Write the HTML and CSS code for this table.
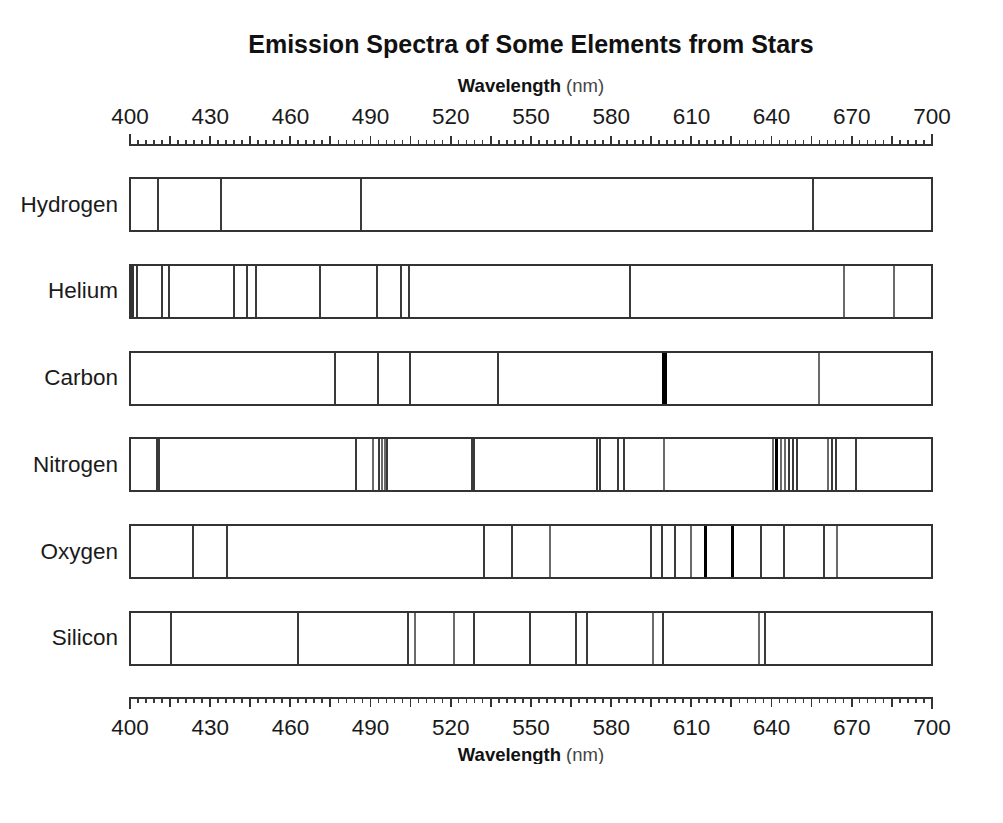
FILE: index.html
```html
<!DOCTYPE html>
<html lang="en">
<head>
<meta charset="utf-8">
<title>Emission Spectra of Some Elements from Stars</title>
<link rel="stylesheet" href="styles.css">
</head>
<body>
<div class="figure">
  <h1 class="title">Emission Spectra of Some Elements from Stars</h1>
  <div class="axis-title axis-title--top"><b>Wavelength</b> (nm)</div>
  <div class="tick-labels tick-labels--top">
    <span>400</span><span>430</span><span>460</span><span>490</span><span>520</span><span>550</span><span>580</span><span>610</span><span>640</span><span>670</span><span>700</span>
  </div>
  <div class="ticks ticks--top"></div>

  <div class="spectra">
    <div class="spectrum">
      <div class="element">Hydrogen</div>
      <div class="band">
        <i class="line" style="left:26px"></i>
        <i class="line" style="left:89px"></i>
        <i class="line" style="left:228.5px"></i>
        <i class="line" style="left:680.7px"></i>
      </div>
    </div>
    <div class="spectrum">
      <div class="element">Helium</div>
      <div class="band">
        <i class="line line--wide" style="left:0px"></i>
        <i class="line" style="left:5.3px"></i>
        <i class="line" style="left:30.3px"></i>
        <i class="line" style="left:36.7px"></i>
        <i class="line" style="left:102px"></i>
        <i class="line" style="left:114.7px"></i>
        <i class="line" style="left:124px"></i>
        <i class="line" style="left:188.3px"></i>
        <i class="line" style="left:244.7px"></i>
        <i class="line" style="left:269px"></i>
        <i class="line" style="left:277px"></i>
        <i class="line" style="left:498px"></i>
        <i class="line line--light" style="left:712px"></i>
        <i class="line line--light" style="left:762px"></i>
      </div>
    </div>
    <div class="spectrum">
      <div class="element">Carbon</div>
      <div class="band">
        <i class="line" style="left:203px"></i>
        <i class="line" style="left:246.3px"></i>
        <i class="line" style="left:278px"></i>
        <i class="line" style="left:366.3px"></i>
        <i class="line line--heavy" style="left:530.5px"></i>
        <i class="line line--light" style="left:686.7px"></i>
      </div>
    </div>
    <div class="spectrum">
      <div class="element">Nitrogen</div>
      <div class="band">
        <i class="line" style="left:24.7px"></i>
        <i class="line" style="left:27.3px"></i>
        <i class="line" style="left:224px"></i>
        <i class="line line--light" style="left:241.3px"></i>
        <i class="line" style="left:247px"></i>
        <i class="line line--light" style="left:250.3px"></i>
        <i class="line line--light" style="left:253px"></i>
        <i class="line" style="left:255.3px"></i>
        <i class="line" style="left:339.7px"></i>
        <i class="line" style="left:342.3px"></i>
        <i class="line" style="left:464.7px"></i>
        <i class="line" style="left:468px"></i>
        <i class="line" style="left:485.7px"></i>
        <i class="line" style="left:492px"></i>
        <i class="line line--light" style="left:532px"></i>
        <i class="line line--light" style="left:640.7px"></i>
        <i class="line line--bold" style="left:644.2px"></i>
        <i class="line line--light" style="left:648.7px"></i>
        <i class="line line--light" style="left:653px"></i>
        <i class="line" style="left:657.3px"></i>
        <i class="line" style="left:661.3px"></i>
        <i class="line" style="left:664.7px"></i>
        <i class="line line--light" style="left:696.3px"></i>
        <i class="line" style="left:699.7px"></i>
        <i class="line" style="left:704px"></i>
        <i class="line" style="left:723.7px"></i>
      </div>
    </div>
    <div class="spectrum">
      <div class="element">Oxygen</div>
      <div class="band">
        <i class="line" style="left:60.7px"></i>
        <i class="line" style="left:95.3px"></i>
        <i class="line" style="left:352.3px"></i>
        <i class="line" style="left:380.3px"></i>
        <i class="line line--light" style="left:418px"></i>
        <i class="line" style="left:518.7px"></i>
        <i class="line" style="left:529.7px"></i>
        <i class="line" style="left:542.7px"></i>
        <i class="line line--light" style="left:559.3px"></i>
        <i class="line line--bold" style="left:572.5px"></i>
        <i class="line line--bold" style="left:599.5px"></i>
        <i class="line" style="left:628.7px"></i>
        <i class="line" style="left:652px"></i>
        <i class="line" style="left:692px"></i>
        <i class="line line--light" style="left:704.7px"></i>
      </div>
    </div>
    <div class="spectrum">
      <div class="element">Silicon</div>
      <div class="band">
        <i class="line" style="left:38.7px"></i>
        <i class="line" style="left:166.3px"></i>
        <i class="line" style="left:276.3px"></i>
        <i class="line line--light" style="left:283px"></i>
        <i class="line line--light" style="left:322px"></i>
        <i class="line" style="left:342.3px"></i>
        <i class="line" style="left:398px"></i>
        <i class="line" style="left:443.7px"></i>
        <i class="line" style="left:454.7px"></i>
        <i class="line line--light" style="left:521.3px"></i>
        <i class="line" style="left:531.3px"></i>
        <i class="line line--light" style="left:627.3px"></i>
        <i class="line" style="left:633px"></i>
      </div>
    </div>
  </div>

  <div class="ticks ticks--bottom"></div>
  <div class="tick-labels tick-labels--bottom">
    <span>400</span><span>430</span><span>460</span><span>490</span><span>520</span><span>550</span><span>580</span><span>610</span><span>640</span><span>670</span><span>700</span>
  </div>
  <div class="axis-title axis-title--bottom"><b>Wavelength</b> (nm)</div>
</div>
</body>
</html>
```

FILE: styles.css
```css
html, body {
  margin: 0;
  padding: 0;
  background: #ffffff;
}

body {
  font-family: "Liberation Sans", Arial, sans-serif;
  color: #1a1a1a;
}

.figure {
  width: 1003px;
  padding-top: 32px;
}

.title {
  margin: 0 0 0 129px;
  width: 804px;
  font-size: 25px;
  line-height: 25px;
  font-weight: bold;
  text-align: center;
  color: #111111;
}

.axis-title {
  margin-left: 129px;
  width: 804px;
  font-size: 18.5px;
  line-height: 18px;
  text-align: center;
  color: #444444;
}

.axis-title b {
  color: #111111;
  font-weight: bold;
}

.axis-title--top {
  margin-top: 20px;
}

.axis-title--bottom {
  margin-top: 7px;
}

.tick-labels {
  display: flex;
  margin-left: 89.9px;
  width: 882.2px;
  font-size: 22.5px;
  line-height: 22px;
  color: #1a1a1a;
}

.tick-labels span {
  flex: 1 1 0;
  text-align: center;
}

.tick-labels--top {
  margin-top: 10.5px;
}

.tick-labels--bottom {
  margin-top: 8px;
}

.ticks {
  margin-left: 129px;
  width: 804px;
  height: 12px;
  box-sizing: border-box;
  border-left: 2px solid #333333;
  border-right: 2px solid #333333;
  background-origin: border-box;
  background-clip: border-box;
  background-repeat: no-repeat;
  background-image:
    repeating-linear-gradient(to right, #333333 0 1.8px, transparent 1.8px 40.1px),
    repeating-linear-gradient(to right, #3a3a3a 0 1.6px, transparent 1.6px 8.02px);
}

.ticks--top {
  margin-top: 6.5px;
  border-bottom: 2px solid #333333;
  background-size: 100% 10px, 100% 6px;
  background-position: left bottom, left bottom;
}

.ticks--bottom {
  margin-top: 31.2px;
  border-top: 2px solid #333333;
  background-size: 100% 10px, 100% 6px;
  background-position: left top, left top;
}

.spectra {
  display: flex;
  flex-direction: column;
  gap: 31.7px;
  margin-top: 31.3px;
}

.spectrum {
  display: flex;
  align-items: center;
}

.element {
  width: 129px;
  box-sizing: border-box;
  padding-right: 11px;
  text-align: right;
  font-size: 22.5px;
  line-height: 26px;
  color: #1a1a1a;
}

.band {
  position: relative;
  width: 804px;
  height: 55px;
  box-sizing: border-box;
  border: 2px solid #333333;
  background: #ffffff;
}

.line {
  position: absolute;
  top: 0;
  bottom: 0;
  width: 2px;
  background: #3a3a3a;
}

.line--light {
  background: #6a6a6a;
}

.line--wide {
  width: 3px;
  background: #333333;
}

.line--bold {
  width: 3px;
  background: #000000;
}

.line--heavy {
  width: 5px;
  background: #000000;
}
```
